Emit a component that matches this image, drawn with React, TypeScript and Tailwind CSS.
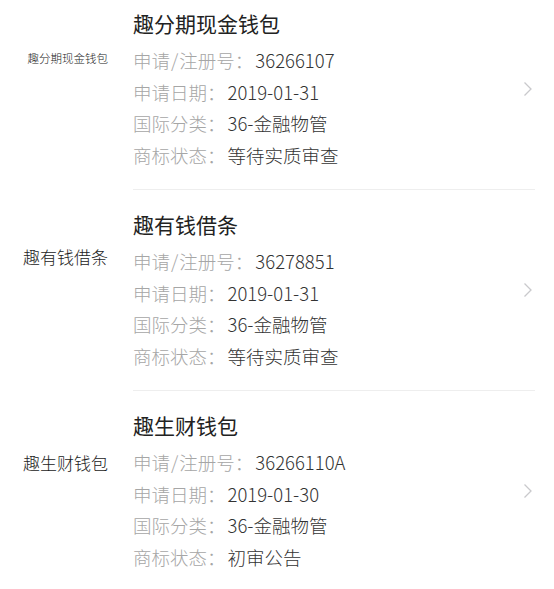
const marks = [
  {
    logo: '趣分期现金钱包',
    logoSize: 'text-[11.5px] leading-[16px] pt-[61px]',
    name: '趣分期现金钱包',
    regNo: '36266107',
    date: '2019-01-31',
    cls: '36-金融物管',
    status: '等待实质审查',
  },
  {
    logo: '趣有钱借条',
    logoSize: 'text-[17px] leading-[24px] pt-[55px]',
    name: '趣有钱借条',
    regNo: '36278851',
    date: '2019-01-31',
    cls: '36-金融物管',
    status: '等待实质审查',
  },
  {
    logo: '趣生财钱包',
    logoSize: 'text-[17px] leading-[24px] pt-[60px]',
    name: '趣生财钱包',
    regNo: '36266110A',
    date: '2019-01-30',
    cls: '36-金融物管',
    status: '初审公告',
  },
]

function Chevron() {
  return (
    <svg width="10" height="16" viewBox="0 0 10 16" fill="none">
      <path d="M1.5 1.5 L8 8 L1.5 14.5" stroke="#c9c9cc" strokeWidth="1.3" />
    </svg>
  )
}

function Row({ label, value }: { label: React.ReactNode; value: string }) {
  return (
    <div className="h-[31.5px] leading-[31.5px] text-[18.5px] font-light whitespace-nowrap">
      <span className="text-[#a6a6a6]">{label}：</span>
      <span className="text-[#333333] ml-[2px]">{value}</span>
    </div>
  )
}

export default function App() {
  return (
    <div
      className="w-[554px] h-[589px] overflow-hidden bg-white"
      style={{ fontFamily: '"Noto Sans CJK SC", "Noto Sans", sans-serif' }}
    >
      <div className="-mt-[11px]">
        {marks.map((m) => (
          <div key={m.name} className="flex">
            <div className={`flex-none w-[133px] text-right pr-[25px] text-[#222] font-light ${m.logoSize}`}>
              {m.logo}
            </div>
            <div className="flex-1 mr-[19px] flex items-center border-b border-[#eeeeee]">
              <div className="flex-1 pt-[20px] pb-[18px]">
                <div className="text-[21px] leading-[28px] text-[#222222] mb-[8px]">{m.name}</div>
                <Row
                  label={
                    <>
                      申请<span className="mx-[1px]">/</span>注册号
                    </>
                  }
                  value={m.regNo}
                />
                <Row label="申请日期" value={m.date} />
                <Row label="国际分类" value={m.cls} />
                <Row label="商标状态" value={m.status} />
              </div>
              <div className="pr-[2px]">
                <Chevron />
              </div>
            </div>
          </div>
        ))}
      </div>
    </div>
  )
}
